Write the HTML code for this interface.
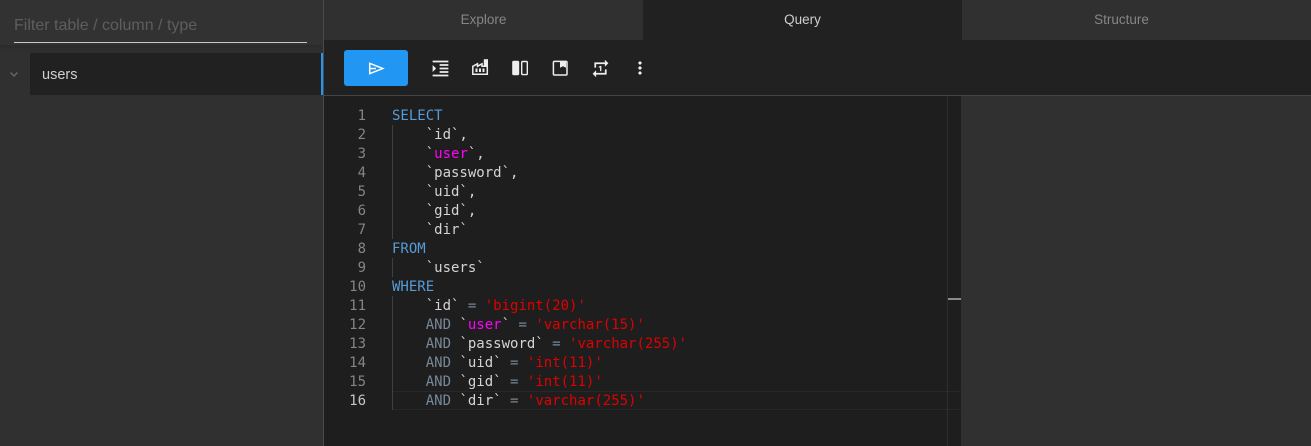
<!DOCTYPE html>
<html>
<head>
<meta charset="utf-8">
<style>
html,body{margin:0;padding:0;width:1311px;height:446px;overflow:hidden;background:#303030}
body{position:relative;font-family:"Liberation Sans",sans-serif}
.a{position:absolute}
.tab{position:absolute;top:0;height:40px;line-height:39px;text-align:center;font-size:13.5px;color:#868686;background:#303030}
.ln,.code{position:absolute;font-family:"DejaVu Sans Mono",monospace;font-size:14px;line-height:19px;height:19px;white-space:pre}
.ln{left:324px;width:42px;text-align:right;color:#858585}
.code{left:392px;color:#d4d4d4}
.k{color:#569cd6}.m{color:#f0f}.s{color:#e00000}.o{color:#778899}
.g{position:absolute;left:392px;width:1px;background:#404040}
svg{position:absolute;display:block}
</style>
</head>
<body>
<div class="a" style="left:0;top:0;width:323px;height:446px;background:#303030"></div>
<div class="a" style="left:0;top:0;width:323px;height:45px;background:#323232;box-shadow:0 2px 6px rgba(0,0,0,.14)"></div>
<div class="a" style="left:14px;top:16px;font-size:16px;line-height:20px;color:#5e5e5e;white-space:nowrap">Filter table / column / type</div>
<div class="a" style="left:14px;top:42px;width:293px;height:1px;background:#c8c8c8"></div>
<svg style="left:8px;top:68px" width="12" height="12" viewBox="0 0 12 12"><path d="M2.500 4.500L6 8l3.500-3.500" fill="none" stroke="#666" stroke-width="1.400"/></svg>
<div class="a" style="left:30px;top:53px;width:291px;height:42px;background:#212121"></div>
<div class="a" style="left:321px;top:53px;width:2px;height:42px;background:#2196f3"></div>
<div class="a" style="left:42px;top:65px;font-size:14.500px;line-height:20px;color:#d0d0d0">users</div>
<div class="a" style="left:323px;top:0;width:1px;height:446px;background:#4a4a4a"></div>

<div class="a" style="left:324px;top:0;width:987px;height:95px;background:#212121"></div>
<div class="tab" style="left:324px;width:319px">Explore</div>
<div class="tab" style="left:643px;width:319px;background:#212121;color:#cfcfcf">Query</div>
<div class="a" style="left:962px;top:0;width:349px;height:40px;background:#303030"></div>
<div class="tab" style="left:962px;width:319px">Structure</div>
<div class="a" style="left:324px;top:95px;width:987px;height:1px;background:#444"></div>

<div class="a" style="left:344px;top:50px;width:64px;height:36px;border-radius:3px;background:#2196f3"></div>
<svg style="left:366px;top:58px" width="20" height="20" viewBox="0 0 20 20"><path d="M3.700 5.300L16.800 10.500 3.700 15.700z" fill="none" stroke="#fff" stroke-width="1.500"/><path d="M3.700 10.500H10" fill="none" stroke="#fff" stroke-width="1.500"/></svg>
<svg style="left:429.500px;top:57.500px" width="21" height="21" viewBox="0 0 24 24"><path fill="#eee" d="M3 21h18v-2H3v2zM3 8v8l4-4-4-4zm8 9h10v-2H11v2zM3 3v2h18V3H3zm8 6h10V7H11v2zm0 4h10v-2H11v2z"/></svg>
<svg style="left:470px;top:57px" width="20" height="20" viewBox="0 0 20 20">
<path d="M2.800 17.300V9.300L7.500 6.800v2.500L12 6.800v2.500h5.300v8z" fill="none" stroke="#eee" stroke-width="1.500"/>
<rect x="13.800" y="2.200" width="4.200" height="7" fill="#eee"/>
<rect x="5.500" y="11.500" width="2" height="3.500" fill="#eee"/><rect x="9" y="11.500" width="2" height="3.500" fill="#eee"/><rect x="12.500" y="11.500" width="2" height="3.500" fill="#eee"/>
</svg>
<svg style="left:510px;top:58px" width="20" height="20" viewBox="0 0 20 20">
<rect x="2.200" y="2.800" width="7" height="14.500" rx="1.500" fill="#eee"/>
<rect x="11.700" y="3.500" width="5.600" height="13.100" rx="1" fill="none" stroke="#eee" stroke-width="1.400"/>
</svg>
<svg style="left:550px;top:58px" width="20" height="20" viewBox="0 0 20 20">
<rect x="3.400" y="3.400" width="13.600" height="13.600" rx="1" fill="none" stroke="#eee" stroke-width="1.500"/>
<path d="M10 3.400h6v6.400l-3-1.600-3 1.600z" fill="#eee"/>
</svg>
<svg style="left:589.500px;top:57.500px" width="21" height="21" viewBox="0 0 24 24"><path fill="#eee" d="M7 7h10v3l4-4-4-4v3H5v6h2V7zm10 10H7v-3l-4 4 4 4v-3h12v-6h-2v4zm-4-2V9h-1l-2 1v1h1.500v4H13z"/></svg>
<svg style="left:630px;top:58px" width="20" height="20" viewBox="0 0 24 24"><path fill="#eee" d="M12 8c1.100 0 2-.9 2-2s-.9-2-2-2-2 .9-2 2 .9 2 2 2zm0 2c-1.100 0-2 .9-2 2s.9 2 2 2 2-.9 2-2-.9-2-2-2zm0 6c-1.100 0-2 .9-2 2s.9 2 2 2 2-.9 2-2-.9-2-2-2z"/></svg>

<div class="a" style="left:324px;top:96px;width:637px;height:350px;background:#1e1e1e"></div>
<div class="a" style="left:393px;top:391px;width:568px;height:17px;border-top:1px solid #282828;border-bottom:1px solid #282828"></div>
<div class="a" style="left:947px;top:96px;width:1px;height:350px;background:#2e2e2e"></div>
<div class="a" style="left:948px;top:298px;width:13px;height:2px;background:#8a8a8a"></div>

<div class="g" style="top:125px;height:114px"></div>
<div class="g" style="top:258px;height:19px"></div>
<div class="g" style="top:296px;height:114px"></div>

<div class="ln" style="top:107px">1</div><div class="code k" style="top:107px">SELECT</div>
<div class="ln" style="top:126px">2</div><div class="code" style="top:126px">    `id`,</div>
<div class="ln" style="top:145px">3</div><div class="code" style="top:145px">    `<span class="m">user</span>`,</div>
<div class="ln" style="top:164px">4</div><div class="code" style="top:164px">    `password`,</div>
<div class="ln" style="top:183px">5</div><div class="code" style="top:183px">    `uid`,</div>
<div class="ln" style="top:202px">6</div><div class="code" style="top:202px">    `gid`,</div>
<div class="ln" style="top:221px">7</div><div class="code" style="top:221px">    `dir`</div>
<div class="ln" style="top:240px">8</div><div class="code k" style="top:240px">FROM</div>
<div class="ln" style="top:259px">9</div><div class="code" style="top:259px">    `users`</div>
<div class="ln" style="top:278px">10</div><div class="code k" style="top:278px">WHERE</div>
<div class="ln" style="top:297px">11</div><div class="code" style="top:297px">    `id` <span class="o">=</span> <span class="s">'bigint(20)'</span></div>
<div class="ln" style="top:316px">12</div><div class="code" style="top:316px">    <span class="o">AND</span> `<span class="m">user</span>` <span class="o">=</span> <span class="s">'varchar(15)'</span></div>
<div class="ln" style="top:335px">13</div><div class="code" style="top:335px">    <span class="o">AND</span> `password` <span class="o">=</span> <span class="s">'varchar(255)'</span></div>
<div class="ln" style="top:354px">14</div><div class="code" style="top:354px">    <span class="o">AND</span> `uid` <span class="o">=</span> <span class="s">'int(11)'</span></div>
<div class="ln" style="top:373px">15</div><div class="code" style="top:373px">    <span class="o">AND</span> `gid` <span class="o">=</span> <span class="s">'int(11)'</span></div>
<div class="ln" style="top:392px;color:#c6c6c6">16</div><div class="code" style="top:392px">    <span class="o">AND</span> `dir` <span class="o">=</span> <span class="s">'varchar(255)'</span></div>
</body>
</html>
